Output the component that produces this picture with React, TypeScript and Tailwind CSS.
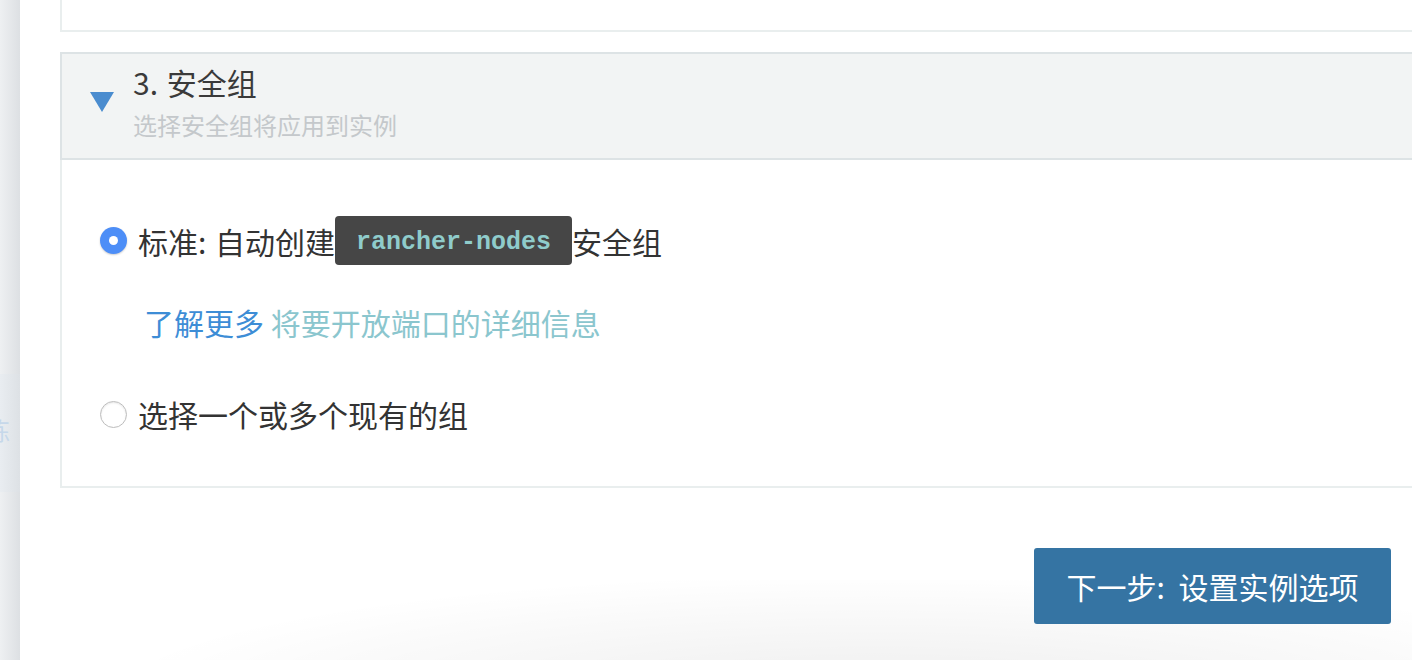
import React from "react";

const sans = { fontFamily: '"Noto Sans CJK SC", "Liberation Sans", sans-serif' };

function Radio({ checked }: { checked?: boolean }) {
  if (checked) {
    return (
      <span className="flex h-[27px] w-[27px] shrink-0 items-center justify-center rounded-full bg-[#4d8ef7] shadow-[0_1px_2px_rgba(0,0,0,0.2)]">
        <span className="h-[9px] w-[9px] rounded-full bg-white" />
      </span>
    );
  }
  return (
    <span className="h-[27px] w-[27px] shrink-0 rounded-full border border-[#bdbdbd] bg-white shadow-[inset_0_1px_2px_rgba(0,0,0,0.1)]" />
  );
}

export default function App() {
  return (
    <div className="relative flex h-[660px] w-[1412px] overflow-hidden bg-white text-[#333]" style={sans}>
      {/* sidebar edge */}
      <div className="flex w-[20px] shrink-0 flex-col bg-gradient-to-r from-[#eef0f2] to-[#dde0e3]">
        <div className="h-[374px]" />
        <div className="relative h-[118px] overflow-hidden bg-gradient-to-r from-[#e9edf1] to-[#dde1e5]">
          <span className="absolute left-[-14px] top-[44px] text-[24px] leading-none text-[#c6d8ea]">练</span>
        </div>
      </div>

      <main className="relative flex min-w-0 flex-1 flex-col pl-[40px]">
        <div className="-mr-[20px]">
          {/* previous section tail */}
          <div className="h-[32px] border-b-2 border-l-2 border-[#e9eeee] bg-white" />

          {/* section 3 header */}
          <div className="mt-[20px] flex items-center border-y-2 border-l-2 border-[#dde3e5] bg-[#f2f4f4] pb-[17px] pl-[28px] pt-[8px]">
            <svg width="24" height="20" viewBox="0 0 24 20" className="shrink-0">
              <path d="M0 0 H24 L12 20 Z" fill="#4a8ccf" />
            </svg>
            <div className="ml-[19px] flex flex-col">
              <div className="text-[30px] leading-[40px] text-[#3a3a3a]">
                3. <span className="ml-[2px]">安全组</span>
              </div>
              <div className="mt-[7px] text-[24px] leading-[32px] text-[#c4c8cb]">选择安全组将应用到实例</div>
            </div>
          </div>

          {/* section 3 body */}
          <div className="flex flex-col border-b-2 border-l-2 border-[#e9eeee] bg-white pb-[52px] pl-[38px] pt-[56px]">
            <label className="flex h-[49px] items-center">
              <Radio checked />
              <span className="ml-[11px] text-[30px] leading-none">
                标准: <span className="ml-[2px]">自动创建</span>
              </span>
              <code
                className="flex h-[49px] items-center rounded-[4px] bg-[#464646] px-[21px] pt-[4px] text-[25px] font-bold text-[#8fcccb]"
                style={{ fontFamily: '"Liberation Mono", monospace' }}
              >
                rancher-nodes
              </code>
              <span className="text-[30px] leading-none">安全组</span>
            </label>

            <div className="ml-[44px] mt-[37px] text-[30px] leading-[40px]">
              <span className="text-[#3d8dd6]">了解更多</span>{" "}
              <span className="text-[#8bc6ce]">将要开放端口的详细信息</span>
            </div>

            <label className="mt-[52px] flex h-[40px] items-center">
              <Radio />
              <span className="ml-[11px] text-[30px] leading-none">选择一个或多个现有的组</span>
            </label>
          </div>
        </div>

        <div className="mt-[60px] flex justify-end pr-[21px]">
          <button className="relative z-10 h-[76px] w-[357px] rounded-[3px] bg-[#3574a3] text-[30px] text-white">
            下一步:&nbsp; 设置实例选项
          </button>
        </div>

        {/* soft shadow at bottom */}
        <div className="pointer-events-none absolute bottom-[-40px] left-[120px] right-[-200px] h-[120px] bg-[radial-gradient(ellipse_at_bottom,rgba(0,0,0,0.07),rgba(0,0,0,0.02)_55%,transparent_75%)]" />
      </main>
    </div>
  );
}
